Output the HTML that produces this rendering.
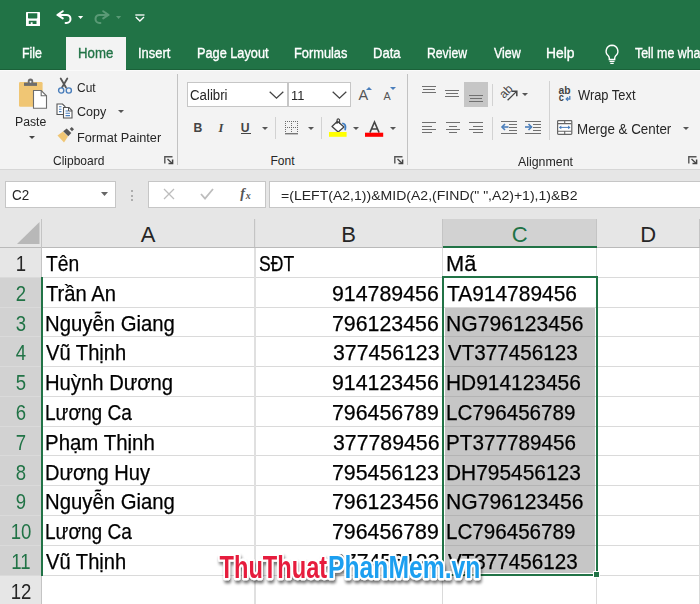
<!DOCTYPE html>
<html><head><meta charset="utf-8">
<style>
*{margin:0;padding:0;box-sizing:border-box}
html,body{width:700px;height:604px;overflow:hidden;background:#fff;font-family:"Liberation Sans",sans-serif}
.abs{position:absolute}
.t{position:absolute;white-space:nowrap;line-height:1;transform-origin:0 0}
svg{overflow:visible}
</style></head><body>
<div class="abs" style="left:0px;top:0px;width:700px;height:70px;background:#217346;"></div>
<svg class="abs" style="left:26px;top:12px;" width="14" height="14" viewBox="0 0 14 14"><rect x="0" y="0" width="14" height="14" rx="0.6" fill="#fff"/><path d="M2 1.3H11.3V6.1L10.7 6.6H2.6L2 6.1Z" fill="#217346"/><path d="M2.8 8.7H10.5V12H6.6V10.2H4.7V12H2.8Z" fill="#217346"/></svg>
<svg class="abs" style="left:56px;top:10px;" width="16" height="15" viewBox="0 0 16 15"><path d="M1.6 4.9H10.5A4 4 0 0 1 10.5 12.9H9.6" fill="none" stroke="#fff" stroke-width="2" stroke-linecap="round"/><path d="M6.8 1.2L1.6 4.9L6.8 8.4" fill="none" stroke="#fff" stroke-width="2" stroke-linecap="round" stroke-linejoin="round"/></svg>
<svg class="abs" style="left:78px;top:16px;" width="6" height="3" viewBox="0 0 6 3"><path d="M0 0H5.2L2.6 3Z" fill="#fff"/></svg>
<svg class="abs" style="left:94px;top:10px;" width="16" height="15" viewBox="0 0 16 15"><path d="M14.4 4.9H5.5A4 4 0 0 0 5.5 12.9H6.4" fill="none" stroke="#5a9a76" stroke-width="2" stroke-linecap="round"/><path d="M9.2 1.2L14.4 4.9L9.2 8.4" fill="none" stroke="#5a9a76" stroke-width="2" stroke-linecap="round" stroke-linejoin="round"/></svg>
<svg class="abs" style="left:116px;top:16px;" width="6" height="3" viewBox="0 0 6 3"><path d="M0 0H5.2L2.6 3Z" fill="#5a9a76"/></svg>
<svg class="abs" style="left:135px;top:14px;" width="10" height="8" viewBox="0 0 10 8"><path d="M0.3 1H9.5" stroke="#fff" stroke-width="1.3"/><path d="M0.8 3L4.9 7L9 3" fill="none" stroke="#fff" stroke-width="1.3"/></svg>
<div class="abs" style="left:66px;top:37px;width:60px;height:33px;background:#f3f3f3;"></div>
<div class="t" style="left:21.93px;top:46.00px;font-size:14.10px;color:#fff;transform:scaleX(0.8791);-webkit-text-stroke:0.35px #fff;">File</div>
<div class="t" style="left:77.57px;top:46.00px;font-size:14.10px;color:#217346;transform:scaleX(0.9378);-webkit-text-stroke:0.35px #217346;">Home</div>
<div class="t" style="left:138.39px;top:46.00px;font-size:14.10px;color:#fff;transform:scaleX(0.9179);-webkit-text-stroke:0.35px #fff;">Insert</div>
<div class="t" style="left:196.80px;top:46.00px;font-size:14.10px;color:#fff;transform:scaleX(0.9037);-webkit-text-stroke:0.35px #fff;">Page Layout</div>
<div class="t" style="left:294.20px;top:46.00px;font-size:14.10px;color:#fff;transform:scaleX(0.9089);-webkit-text-stroke:0.35px #fff;">Formulas</div>
<div class="t" style="left:373.28px;top:46.00px;font-size:14.10px;color:#fff;transform:scaleX(0.9281);-webkit-text-stroke:0.35px #fff;">Data</div>
<div class="t" style="left:427.05px;top:46.00px;font-size:14.10px;color:#fff;transform:scaleX(0.8654);-webkit-text-stroke:0.35px #fff;">Review</div>
<div class="t" style="left:494.00px;top:46.00px;font-size:14.10px;color:#fff;transform:scaleX(0.8794);-webkit-text-stroke:0.35px #fff;">View</div>
<div class="t" style="left:546.12px;top:46.00px;font-size:14.10px;color:#fff;transform:scaleX(0.9808);-webkit-text-stroke:0.35px #fff;">Help</div>
<div class="t" style="left:634.61px;top:46.00px;font-size:14.10px;color:#fff;transform:scaleX(0.8798);-webkit-text-stroke:0.35px #fff;">Tell me wha</div>
<svg class="abs" style="left:604px;top:44px;" width="16" height="21" viewBox="0 0 16 21"><path d="M8 1.2A6 6 0 0 0 4.3 11.8C5 12.6 5.3 13.3 5.3 14.3V15.5H10.7V14.3C10.7 13.3 11 12.6 11.7 11.8A6 6 0 0 0 8 1.2Z" fill="none" stroke="#fff" stroke-width="1.4"/><path d="M5.5 17.3H10.5M6.3 19.3H9.7" stroke="#fff" stroke-width="1.3"/></svg>
<div class="abs" style="left:0px;top:70px;width:700px;height:99px;background:#f3f3f3;"></div>
<div class="abs" style="left:0px;top:69px;width:66px;height:1px;background:#1b6139;"></div>
<div class="abs" style="left:126px;top:69px;width:574px;height:1px;background:#1b6139;"></div>
<div class="abs" style="left:0px;top:70px;width:700px;height:1px;background:#fafafa;"></div>
<div class="abs" style="left:0px;top:169px;width:700px;height:50px;background:#e6e6e6;"></div>
<div class="abs" style="left:0px;top:169px;width:700px;height:1px;background:#d6d6d6;"></div>
<div class="abs" style="left:177px;top:74px;width:1px;height:91px;background:#c2c2c2;"></div>
<div class="abs" style="left:407px;top:74px;width:1px;height:91px;background:#c2c2c2;"></div>
<div class="abs" style="left:275px;top:117px;width:1px;height:22px;background:#d2d2d2;"></div>
<div class="abs" style="left:321px;top:117px;width:1px;height:22px;background:#d2d2d2;"></div>
<div class="abs" style="left:492px;top:84px;width:1px;height:22px;background:#d2d2d2;"></div>
<div class="abs" style="left:492px;top:117px;width:1px;height:23px;background:#d2d2d2;"></div>
<div class="abs" style="left:549px;top:81px;width:1px;height:59px;background:#d2d2d2;"></div>
<svg class="abs" style="left:14px;top:76px;" width="36" height="36" viewBox="0 0 36 36"><rect x="5" y="6" width="23.6" height="24.7" rx="1.3" fill="#f0c674"/><rect x="10" y="6.6" width="13" height="3.3" fill="#6d6d6d"/><path d="M13.8 7V5.2A2.7 2.7 0 0 1 19.2 5.2V7Z" fill="#6d6d6d"/><circle cx="16.5" cy="5.8" r="1" fill="#f3f3f3"/><path d="M19.5 14.5H27.2L32.5 19.8V32.3H19.5Z" fill="#fff" stroke="#6d6d6d" stroke-width="1.1"/><path d="M27.2 14.5V19.8H32.5" fill="none" stroke="#6d6d6d" stroke-width="1.1"/></svg>
<div class="t" style="left:15.24px;top:116.00px;font-size:12.21px;color:#262626;transform:scaleX(1.0043);">Paste</div>
<svg class="abs" style="left:29px;top:136px;" width="6" height="3" viewBox="0 0 6 3"><path d="M0 0H6L3 3Z" fill="#444"/></svg>
<svg class="abs" style="left:56px;top:77px;" width="16" height="17" viewBox="0 0 16 17"><path d="M4.7 1.5L10 10.5M11.3 1.5L6 10.5" stroke="#555" stroke-width="1.8" stroke-linecap="round"/><circle cx="5.2" cy="13.5" r="2.6" fill="#f3f3f3" stroke="#4a7ebb" stroke-width="1.4"/><circle cx="12.8" cy="13.5" r="2.6" fill="#f3f3f3" stroke="#4a7ebb" stroke-width="1.4"/></svg>
<div class="t" style="left:77.34px;top:82.00px;font-size:12.35px;color:#262626;transform:scaleX(0.9685);">Cut</div>
<svg class="abs" style="left:56px;top:103px;" width="17" height="16" viewBox="0 0 17 16"><path d="M1 1H6.5L9 3.5V11.5H1Z" fill="#fff" stroke="#555" stroke-width="1.1"/><path d="M7.5 4.5H13L16 7.5V15H7.5Z" fill="#fff" stroke="#555" stroke-width="1.1"/><path d="M12.5 4.5V8H16" fill="none" stroke="#555" stroke-width="1"/><path d="M3 3.8H5.5M3 6.2H5.5M3 8.6H5.5M9.5 8H12.2M9.5 10.3H14M9.5 12.6H14" stroke="#4a7ebb" stroke-width="1.1"/></svg>
<div class="t" style="left:77.31px;top:106.00px;font-size:12.35px;color:#262626;transform:scaleX(1.0155);">Copy</div>
<svg class="abs" style="left:118px;top:110px;" width="6" height="3" viewBox="0 0 6 3"><path d="M0 0H6L3 3Z" fill="#555"/></svg>
<svg class="abs" style="left:56px;top:128px;" width="18" height="16" viewBox="0 0 18 16"><path d="M1.5 7.5L7 3.5L12 8.5L8 14.5Z" fill="#f0c674"/><path d="M7.2 3.2L10.7 0.4L15.3 5L12.3 8.3Z" fill="#555"/><path d="M13.7 0.9L15.7 -1L18 1.3L16 3.2Z" fill="#555"/></svg>
<div class="t" style="left:76.91px;top:132.00px;font-size:12.50px;color:#262626;transform:scaleX(1.0180);">Format Painter</div>
<div class="t" style="left:53.44px;top:155.00px;font-size:12.06px;color:#262626;transform:scaleX(0.9961);">Clipboard</div>
<svg class="abs" style="left:164px;top:156px;" width="10" height="9" viewBox="0 0 10 9"><path d="M0.8 7.5V0.8H8.5" fill="none" stroke="#555" stroke-width="1.4"/><path d="M3.5 3L8 7.3" stroke="#444" stroke-width="1.3"/><path d="M4.5 7.6H8.6V3.5" fill="none" stroke="#444" stroke-width="1.5"/></svg>
<div class="abs" style="left:187px;top:82px;width:101px;height:25px;background:#fff;border:1px solid #c6c6c6"></div>
<div class="abs" style="left:288px;top:82px;width:63px;height:25px;background:#fff;border:1px solid #c6c6c6"></div>
<div class="t" style="left:190.08px;top:89.00px;font-size:13.81px;color:#262626;transform:scaleX(0.9608);">Calibri</div>
<div class="t" style="left:291.20px;top:89.00px;font-size:13.08px;color:#262626;transform:scaleX(0.9810);">11</div>
<svg class="abs" style="left:269px;top:91px;" width="15" height="8" viewBox="0 0 15 8"><path d="M0.7 0.7L7.5 7.1L14.3 0.7" fill="none" stroke="#444" stroke-width="1.3"/></svg>
<svg class="abs" style="left:332px;top:91px;" width="15" height="8" viewBox="0 0 15 8"><path d="M0.7 0.7L7.5 7.1L14.3 0.7" fill="none" stroke="#444" stroke-width="1.3"/></svg>
<div class="t" style="left:358.40px;top:88.00px;font-size:14.53px;color:#555;">A</div>
<svg class="abs" style="left:366px;top:87px;" width="6" height="3" viewBox="0 0 6 3"><path d="M0 3H6L3 0Z" fill="#4a7ebb"/></svg>
<div class="t" style="left:383.60px;top:91.00px;font-size:10.76px;color:#555;">A</div>
<svg class="abs" style="left:390px;top:87px;" width="6" height="3" viewBox="0 0 6 3"><path d="M0 0H6L3 3Z" fill="#4a7ebb"/></svg>
<div class="t" style="left:193.54px;top:122.00px;font-size:12.21px;color:#444;font-weight:bold;">B</div>
<div class="t" style="left:218.50px;top:122.00px;font-size:12.50px;color:#444;font-weight:bold;font-style:italic;font-family:'Liberation Serif',serif;">I</div>
<div class="t" style="left:240.83px;top:122.00px;font-size:12.21px;color:#444;font-weight:bold;">U</div>
<div class="abs" style="left:241px;top:133px;width:10px;height:1px;background:#444;"></div>
<svg class="abs" style="left:262px;top:127px;" width="6" height="3" viewBox="0 0 6 3"><path d="M0 0H6L3 3Z" fill="#555"/></svg>
<svg class="abs" style="left:285px;top:121px;" width="14" height="14" viewBox="0 0 14 14"><rect x="0" y="0" width="1" height="1" fill="#6d6d6d"/><rect x="0" y="2" width="1" height="1" fill="#6d6d6d"/><rect x="0" y="4" width="1" height="1" fill="#6d6d6d"/><rect x="0" y="6" width="1" height="1" fill="#6d6d6d"/><rect x="0" y="8" width="1" height="1" fill="#6d6d6d"/><rect x="0" y="10" width="1" height="1" fill="#6d6d6d"/><rect x="2" y="0" width="1" height="1" fill="#6d6d6d"/><rect x="2" y="6" width="1" height="1" fill="#6d6d6d"/><rect x="4" y="0" width="1" height="1" fill="#6d6d6d"/><rect x="4" y="6" width="1" height="1" fill="#6d6d6d"/><rect x="6" y="0" width="1" height="1" fill="#6d6d6d"/><rect x="6" y="2" width="1" height="1" fill="#6d6d6d"/><rect x="6" y="4" width="1" height="1" fill="#6d6d6d"/><rect x="6" y="6" width="1" height="1" fill="#6d6d6d"/><rect x="6" y="8" width="1" height="1" fill="#6d6d6d"/><rect x="6" y="10" width="1" height="1" fill="#6d6d6d"/><rect x="8" y="0" width="1" height="1" fill="#6d6d6d"/><rect x="8" y="6" width="1" height="1" fill="#6d6d6d"/><rect x="10" y="0" width="1" height="1" fill="#6d6d6d"/><rect x="10" y="6" width="1" height="1" fill="#6d6d6d"/><rect x="12" y="0" width="1" height="1" fill="#6d6d6d"/><rect x="12" y="2" width="1" height="1" fill="#6d6d6d"/><rect x="12" y="4" width="1" height="1" fill="#6d6d6d"/><rect x="12" y="6" width="1" height="1" fill="#6d6d6d"/><rect x="12" y="8" width="1" height="1" fill="#6d6d6d"/><rect x="12" y="10" width="1" height="1" fill="#6d6d6d"/><rect x="0" y="12" width="13" height="1.4" fill="#777"/></svg>
<svg class="abs" style="left:307.5px;top:126.8px;" width="6" height="3" viewBox="0 0 6 3"><path d="M0 0H6L3 3Z" fill="#555"/></svg>
<svg class="abs" style="left:328px;top:117px;" width="20" height="21" viewBox="0 0 20 21"><path d="M4 9.5L9.5 4.2L16 10L10.2 15Z" fill="#fff" stroke="#444" stroke-width="1.3" stroke-linejoin="round"/><path d="M9 7V3.2A1.3 1.3 0 0 1 11.6 3.2V7" fill="none" stroke="#444" stroke-width="1.1"/><path d="M15 6.5C17 7 18 9 17.2 12.5" fill="none" stroke="#3f7ec4" stroke-width="1.8" stroke-linecap="round"/><rect x="1" y="15" width="17.6" height="4.8" fill="#ffff00"/></svg>
<svg class="abs" style="left:353px;top:127px;" width="6" height="3" viewBox="0 0 6 3"><path d="M0 0H6L3 3Z" fill="#555"/></svg>
<svg class="abs" style="left:365px;top:120px;" width="19" height="17" viewBox="0 0 19 17"><path d="M4.9 12.6L9.5 2L14.1 12.6M6.6 9H12.4" fill="none" stroke="#444" stroke-width="1.6"/><rect x="0" y="12.7" width="18.2" height="4.1" fill="#ff0000"/></svg>
<svg class="abs" style="left:390px;top:127px;" width="6" height="3" viewBox="0 0 6 3"><path d="M0 0H6L3 3Z" fill="#555"/></svg>
<div class="t" style="left:270.46px;top:155.00px;font-size:12.06px;color:#262626;">Font</div>
<svg class="abs" style="left:394px;top:156px;" width="10" height="9" viewBox="0 0 10 9"><path d="M0.8 7.5V0.8H8.5" fill="none" stroke="#555" stroke-width="1.4"/><path d="M3.5 3L8 7.3" stroke="#444" stroke-width="1.3"/><path d="M4.5 7.6H8.6V3.5" fill="none" stroke="#444" stroke-width="1.5"/></svg>
<div class="abs" style="left:422px;top:86px;width:14px;height:1px;background:#707070;"></div>
<div class="abs" style="left:423px;top:89px;width:12px;height:1px;background:#707070;"></div>
<div class="abs" style="left:422px;top:92px;width:14px;height:1px;background:#707070;"></div>
<div class="abs" style="left:445px;top:90px;width:14px;height:1px;background:#707070;"></div>
<div class="abs" style="left:446px;top:93px;width:12px;height:1px;background:#707070;"></div>
<div class="abs" style="left:445px;top:96px;width:14px;height:1px;background:#707070;"></div>
<div class="abs" style="left:464px;top:82px;width:24px;height:25px;background:#c6c6c6;"></div>
<div class="abs" style="left:469px;top:95px;width:14px;height:1px;background:#707070;"></div>
<div class="abs" style="left:470px;top:98px;width:12px;height:1px;background:#707070;"></div>
<div class="abs" style="left:469px;top:101px;width:14px;height:1px;background:#707070;"></div>
<div class="abs" style="left:422px;top:122px;width:14px;height:1px;background:#707070;"></div>
<div class="abs" style="left:422px;top:126px;width:10px;height:1px;background:#707070;"></div>
<div class="abs" style="left:422px;top:129px;width:14px;height:1px;background:#707070;"></div>
<div class="abs" style="left:422px;top:132px;width:10px;height:1px;background:#707070;"></div>
<div class="abs" style="left:446px;top:122px;width:14px;height:1px;background:#707070;"></div>
<div class="abs" style="left:449px;top:126px;width:8px;height:1px;background:#707070;"></div>
<div class="abs" style="left:446px;top:129px;width:14px;height:1px;background:#707070;"></div>
<div class="abs" style="left:449px;top:132px;width:8px;height:1px;background:#707070;"></div>
<div class="abs" style="left:469px;top:122px;width:14px;height:1px;background:#707070;"></div>
<div class="abs" style="left:473px;top:126px;width:10px;height:1px;background:#707070;"></div>
<div class="abs" style="left:469px;top:129px;width:14px;height:1px;background:#707070;"></div>
<div class="abs" style="left:473px;top:132px;width:10px;height:1px;background:#707070;"></div>
<svg class="abs" style="left:496px;top:82px;" width="24" height="22" viewBox="0 0 24 22"><text x="10" y="13.3" text-anchor="middle" font-family="Liberation Sans" font-size="12" fill="#444" transform="rotate(-45 10 9.5)">ab</text><path d="M11.6 18.2L20.6 9.4" stroke="#444" stroke-width="1.3"/><path d="M15.8 9.2H20.8V14.2" fill="none" stroke="#444" stroke-width="1.5"/></svg>
<svg class="abs" style="left:522px;top:93px;" width="6" height="3" viewBox="0 0 6 3"><path d="M0 0H6L3 3Z" fill="#555"/></svg>
<div class="abs" style="left:501px;top:121px;width:16px;height:1px;background:#707070;"></div>
<div class="abs" style="left:509px;top:124px;width:8px;height:1px;background:#707070;"></div>
<div class="abs" style="left:509px;top:127px;width:8px;height:1px;background:#707070;"></div>
<div class="abs" style="left:509px;top:130px;width:8px;height:1px;background:#707070;"></div>
<div class="abs" style="left:501px;top:133px;width:16px;height:1px;background:#707070;"></div>
<div class="abs" style="left:525px;top:121px;width:16px;height:1px;background:#707070;"></div>
<div class="abs" style="left:533px;top:124px;width:8px;height:1px;background:#707070;"></div>
<div class="abs" style="left:533px;top:127px;width:8px;height:1px;background:#707070;"></div>
<div class="abs" style="left:533px;top:130px;width:8px;height:1px;background:#707070;"></div>
<div class="abs" style="left:525px;top:133px;width:16px;height:1px;background:#707070;"></div>
<svg class="abs" style="left:501px;top:123px;" width="8" height="8" viewBox="0 0 8 8"><path d="M1 4H7.5" stroke="#4a7ebb" stroke-width="1.6"/><path d="M4 1L1 4L4 7" fill="none" stroke="#4a7ebb" stroke-width="1.6"/></svg>
<svg class="abs" style="left:525px;top:123px;" width="8" height="8" viewBox="0 0 8 8"><path d="M0 4H6.5" stroke="#4a7ebb" stroke-width="1.6"/><path d="M3.5 1L6.5 4L3.5 7" fill="none" stroke="#4a7ebb" stroke-width="1.6"/></svg>
<svg class="abs" style="left:558px;top:86px;" width="14" height="16" viewBox="0 0 14 16"><text x="0.6" y="7.8" font-family="Liberation Sans" font-weight="bold" font-size="10.3" fill="#444">ab</text><text x="1" y="14.9" font-family="Liberation Sans" font-weight="bold" font-size="10.8" fill="#444" transform="scale(0.85 1)">c</text><path d="M11.8 10V13H8.8" fill="none" stroke="#4a7ebb" stroke-width="1.3"/><path d="M10 11.3L8.2 13L10 14.7" fill="none" stroke="#4a7ebb" stroke-width="1.2"/></svg>
<div class="t" style="left:577.70px;top:89.00px;font-size:13.95px;color:#262626;transform:scaleX(0.9233);">Wrap Text</div>
<svg class="abs" style="left:557px;top:120px;" width="16" height="15" viewBox="0 0 16 15"><rect x="0.6" y="0.6" width="14.2" height="13.8" rx="0.8" fill="#fff" stroke="#666" stroke-width="1.2"/><path d="M0.5 3.6H14.5M0.5 11.3H14.5M7.7 0.5V3.6M7.7 11.3V14.5" stroke="#666" stroke-width="1.1"/><path d="M3.5 7.4H12" stroke="#4a7ebb" stroke-width="1"/><path d="M1.8 7.4L4.3 5.6V9.2Z M13.6 7.4L11.1 5.6V9.2Z" fill="#4a7ebb"/></svg>
<div class="t" style="left:576.66px;top:123.00px;font-size:13.95px;color:#262626;transform:scaleX(0.9586);">Merge & Center</div>
<svg class="abs" style="left:683px;top:127px;" width="6" height="3" viewBox="0 0 6 3"><path d="M0 0H6L3 3Z" fill="#555"/></svg>
<div class="t" style="left:517.70px;top:156.00px;font-size:12.50px;color:#262626;transform:scaleX(0.9887);">Alignment</div>
<svg class="abs" style="left:688px;top:156px;" width="10" height="9" viewBox="0 0 10 9"><path d="M0.8 7.5V0.8H8.5" fill="none" stroke="#555" stroke-width="1.4"/><path d="M3.5 3L8 7.3" stroke="#444" stroke-width="1.3"/><path d="M4.5 7.6H8.6V3.5" fill="none" stroke="#444" stroke-width="1.5"/></svg>
<div class="abs" style="left:5px;top:181px;width:111px;height:27px;background:#fff;border:1px solid #c6c6c6"></div>
<div class="t" style="left:11.77px;top:189.00px;font-size:13.95px;color:#262626;transform:scaleX(0.9628);">C2</div>
<svg class="abs" style="left:101px;top:192px;" width="8" height="4" viewBox="0 0 8 4"><path d="M0 0H7L3.5 4Z" fill="#666"/></svg>
<div class="abs" style="left:131px;top:190px;width:2px;height:2px;background:#9a9a9a;border-radius:1px"></div>
<div class="abs" style="left:131px;top:194.5px;width:2px;height:2px;background:#9a9a9a;border-radius:1px"></div>
<div class="abs" style="left:131px;top:199px;width:2px;height:2px;background:#9a9a9a;border-radius:1px"></div>
<div class="abs" style="left:148px;top:181px;width:118px;height:27px;background:#fff;border:1px solid #c6c6c6"></div>
<svg class="abs" style="left:163px;top:188px;" width="12" height="12" viewBox="0 0 12 12"><path d="M1 1L11 11M11 1L1 11" stroke="#bdbdbd" stroke-width="1.3"/></svg>
<svg class="abs" style="left:200px;top:188px;" width="14" height="12" viewBox="0 0 14 12"><path d="M1 6L5 10.5L13 1" fill="none" stroke="#bdbdbd" stroke-width="1.8"/></svg>
<div class="t" style="left:240.30px;top:187.00px;font-size:14.00px;color:#555;font-style:italic;font-family:'Liberation Serif',serif;font-weight:bold;">f</div>
<div class="t" style="left:245.66px;top:191.00px;font-size:10.00px;color:#555;font-style:italic;font-family:'Liberation Serif',serif;font-weight:bold;">x</div>
<div class="abs" style="left:269px;top:181px;width:440px;height:27px;background:#fff;border:1px solid #c6c6c6"></div>
<div class="t" style="left:281.14px;top:189.00px;font-size:13.37px;color:#262626;transform:scaleX(1.0519);">=(LEFT(A2,1))&amp;MID(A2,(FIND(" ",A2)+1),1)&amp;B2</div>
<div class="abs" style="left:0px;top:219px;width:700px;height:385px;background:#fff;"></div>
<div class="abs" style="left:0px;top:219px;width:700px;height:29px;background:#e6e6e6;"></div>
<div class="abs" style="left:443px;top:219px;width:154px;height:29px;background:#d2d2d2;"></div>
<div class="abs" style="left:0px;top:248px;width:41px;height:356px;background:#e6e6e6;"></div>
<div class="abs" style="left:0px;top:278px;width:41px;height:298px;background:#d2d2d2;"></div>
<div class="abs" style="left:0px;top:247px;width:700px;height:1px;background:#dadada;"></div>
<div class="abs" style="left:0px;top:277px;width:700px;height:1px;background:#dadada;"></div>
<div class="abs" style="left:0px;top:307px;width:700px;height:1px;background:#dadada;"></div>
<div class="abs" style="left:0px;top:336px;width:700px;height:1px;background:#dadada;"></div>
<div class="abs" style="left:0px;top:366px;width:700px;height:1px;background:#dadada;"></div>
<div class="abs" style="left:0px;top:396px;width:700px;height:1px;background:#dadada;"></div>
<div class="abs" style="left:0px;top:426px;width:700px;height:1px;background:#dadada;"></div>
<div class="abs" style="left:0px;top:455px;width:700px;height:1px;background:#dadada;"></div>
<div class="abs" style="left:0px;top:485px;width:700px;height:1px;background:#dadada;"></div>
<div class="abs" style="left:0px;top:515px;width:700px;height:1px;background:#dadada;"></div>
<div class="abs" style="left:0px;top:545px;width:700px;height:1px;background:#dadada;"></div>
<div class="abs" style="left:0px;top:575px;width:700px;height:1px;background:#dadada;"></div>
<div class="abs" style="left:41px;top:219px;width:1px;height:385px;background:#dadada;"></div>
<div class="abs" style="left:442px;top:219px;width:1px;height:385px;background:#dadada;"></div>
<div class="abs" style="left:596px;top:219px;width:1px;height:385px;background:#dadada;"></div>
<div class="abs" style="left:699px;top:219px;width:1px;height:385px;background:#dadada;"></div>
<div class="abs" style="left:254px;top:219px;width:2px;height:385px;background:#e0e0e0;"></div>
<div class="abs" style="left:445px;top:308px;width:150px;height:265px;background:#c6c6c6;"></div>
<div class="abs" style="left:445px;top:336px;width:150px;height:1px;background:#b4b4b4;"></div>
<div class="abs" style="left:445px;top:366px;width:150px;height:1px;background:#b4b4b4;"></div>
<div class="abs" style="left:445px;top:396px;width:150px;height:1px;background:#b4b4b4;"></div>
<div class="abs" style="left:445px;top:426px;width:150px;height:1px;background:#b4b4b4;"></div>
<div class="abs" style="left:445px;top:455px;width:150px;height:1px;background:#b4b4b4;"></div>
<div class="abs" style="left:445px;top:485px;width:150px;height:1px;background:#b4b4b4;"></div>
<div class="abs" style="left:445px;top:515px;width:150px;height:1px;background:#b4b4b4;"></div>
<div class="abs" style="left:445px;top:545px;width:150px;height:1px;background:#b4b4b4;"></div>
<div class="abs" style="left:0px;top:247px;width:700px;height:1px;background:#bababa;"></div>
<div class="abs" style="left:254px;top:219px;width:1px;height:28px;background:#c4c4c4;"></div>
<div class="abs" style="left:442px;top:219px;width:1px;height:28px;background:#c4c4c4;"></div>
<div class="abs" style="left:596px;top:219px;width:1px;height:28px;background:#c4c4c4;"></div>
<div class="abs" style="left:699px;top:219px;width:1px;height:28px;background:#c4c4c4;"></div>
<div class="abs" style="left:41px;top:219px;width:1px;height:385px;background:#c4c4c4;"></div>
<svg class="abs" style="left:17px;top:222px;" width="23" height="22" viewBox="0 0 23 22"><path d="M22.5 0V22H0Z" fill="#b8b8b8"/></svg>
<div class="t" style="left:0;width:42px;text-align:center;top:253px;font-size:21.6px;color:#262626;transform:scaleX(0.86);transform-origin:21px 0">1</div>
<div class="t" style="left:0;width:42px;text-align:center;top:283px;font-size:21.6px;color:#217346;transform:scaleX(0.86);transform-origin:21px 0">2</div>
<div class="t" style="left:0;width:42px;text-align:center;top:313px;font-size:21.6px;color:#217346;transform:scaleX(0.86);transform-origin:21px 0">3</div>
<div class="t" style="left:0;width:42px;text-align:center;top:342px;font-size:21.6px;color:#217346;transform:scaleX(0.86);transform-origin:21px 0">4</div>
<div class="t" style="left:0;width:42px;text-align:center;top:372px;font-size:21.6px;color:#217346;transform:scaleX(0.86);transform-origin:21px 0">5</div>
<div class="t" style="left:0;width:42px;text-align:center;top:402px;font-size:21.6px;color:#217346;transform:scaleX(0.86);transform-origin:21px 0">6</div>
<div class="t" style="left:0;width:42px;text-align:center;top:432px;font-size:21.6px;color:#217346;transform:scaleX(0.86);transform-origin:21px 0">7</div>
<div class="t" style="left:0;width:42px;text-align:center;top:462px;font-size:21.6px;color:#217346;transform:scaleX(0.86);transform-origin:21px 0">8</div>
<div class="t" style="left:0;width:42px;text-align:center;top:491px;font-size:21.6px;color:#217346;transform:scaleX(0.86);transform-origin:21px 0">9</div>
<div class="t" style="left:0;width:42px;text-align:center;top:521px;font-size:21.6px;color:#217346;transform:scaleX(0.86);transform-origin:21px 0">10</div>
<div class="t" style="left:0;width:42px;text-align:center;top:551px;font-size:21.6px;color:#217346;transform:scaleX(0.86);transform-origin:21px 0">11</div>
<div class="t" style="left:0;width:42px;text-align:center;top:581px;font-size:21.6px;color:#262626;transform:scaleX(0.86);transform-origin:21px 0">12</div>
<div class="t" style="left:41.5px;width:213.2px;text-align:center;top:224px;font-size:22px;color:#262626">A</div>
<div class="t" style="left:254.7px;width:187.90000000000003px;text-align:center;top:224px;font-size:22px;color:#262626">B</div>
<div class="t" style="left:442.6px;width:154.0px;text-align:center;top:224px;font-size:22px;color:#217346">C</div>
<div class="t" style="left:596.6px;width:103px;text-align:center;top:224px;font-size:22px;color:#262626">D</div>
<div class="t" style="left:46.00px;top:253.00px;font-size:21.60px;color:#000;transform:scaleX(0.8915);-webkit-text-stroke:0.25px #000;">Tên</div>
<div class="t" style="left:258.55px;top:253.00px;font-size:21.60px;color:#000;transform:scaleX(0.8136);-webkit-text-stroke:0.25px #000;">SĐT</div>
<div class="t" style="left:445.90px;top:253.00px;font-size:21.60px;color:#000;transform:scaleX(1.0086);-webkit-text-stroke:0.25px #000;">Mã</div>
<div class="t" style="left:45.98px;top:283.00px;font-size:21.60px;color:#000;transform:scaleX(0.9358);-webkit-text-stroke:0.25px #000;">Trần An</div>
<div class="t" style="left:332.30px;top:283.00px;font-size:21.60px;color:#000;transform:scaleX(0.9884);-webkit-text-stroke:0.25px #000;">914789456</div>
<div class="t" style="left:447.27px;top:283.00px;font-size:21.60px;color:#000;transform:scaleX(0.9691);-webkit-text-stroke:0.25px #000;">TA914789456</div>
<div class="t" style="left:44.71px;top:313.00px;font-size:21.60px;color:#000;transform:scaleX(0.9409);-webkit-text-stroke:0.25px #000;">Nguyễn Giang</div>
<div class="t" style="left:332.30px;top:313.00px;font-size:21.60px;color:#000;transform:scaleX(0.9884);-webkit-text-stroke:0.25px #000;">796123456</div>
<div class="t" style="left:445.95px;top:313.00px;font-size:21.60px;color:#000;transform:scaleX(0.9779);-webkit-text-stroke:0.25px #000;">NG796123456</div>
<div class="t" style="left:46.30px;top:342.00px;font-size:21.60px;color:#000;transform:scaleX(0.9327);-webkit-text-stroke:0.25px #000;">Vũ Thịnh</div>
<div class="t" style="left:332.63px;top:342.00px;font-size:21.60px;color:#000;transform:scaleX(0.9853);-webkit-text-stroke:0.25px #000;">377456123</div>
<div class="t" style="left:447.60px;top:342.00px;font-size:21.60px;color:#000;transform:scaleX(0.9552);-webkit-text-stroke:0.25px #000;">VT377456123</div>
<div class="t" style="left:44.72px;top:372.00px;font-size:21.60px;color:#000;transform:scaleX(0.9373);-webkit-text-stroke:0.25px #000;">Huỳnh Dương</div>
<div class="t" style="left:332.30px;top:372.00px;font-size:21.60px;color:#000;transform:scaleX(0.9884);-webkit-text-stroke:0.25px #000;">914123456</div>
<div class="t" style="left:445.97px;top:372.00px;font-size:21.60px;color:#000;transform:scaleX(0.9675);-webkit-text-stroke:0.25px #000;">HD914123456</div>
<div class="t" style="left:44.81px;top:402.00px;font-size:21.60px;color:#000;transform:scaleX(0.8839);-webkit-text-stroke:0.25px #000;">Lương Ca</div>
<div class="t" style="left:332.30px;top:402.00px;font-size:21.60px;color:#000;transform:scaleX(0.9884);-webkit-text-stroke:0.25px #000;">796456789</div>
<div class="t" style="left:445.99px;top:402.00px;font-size:21.60px;color:#000;transform:scaleX(0.9537);-webkit-text-stroke:0.25px #000;">LC796456789</div>
<div class="t" style="left:44.70px;top:432.00px;font-size:21.60px;color:#000;transform:scaleX(0.9467);-webkit-text-stroke:0.25px #000;">Phạm Thịnh</div>
<div class="t" style="left:332.63px;top:432.00px;font-size:21.60px;color:#000;transform:scaleX(0.9853);-webkit-text-stroke:0.25px #000;">377789456</div>
<div class="t" style="left:445.98px;top:432.00px;font-size:21.60px;color:#000;transform:scaleX(0.9575);-webkit-text-stroke:0.25px #000;">PT377789456</div>
<div class="t" style="left:44.73px;top:462.00px;font-size:21.60px;color:#000;transform:scaleX(0.9317);-webkit-text-stroke:0.25px #000;">Dương Huy</div>
<div class="t" style="left:332.30px;top:462.00px;font-size:21.60px;color:#000;transform:scaleX(0.9884);-webkit-text-stroke:0.25px #000;">795456123</div>
<div class="t" style="left:445.97px;top:462.00px;font-size:21.60px;color:#000;transform:scaleX(0.9675);-webkit-text-stroke:0.25px #000;">DH795456123</div>
<div class="t" style="left:44.71px;top:491.00px;font-size:21.60px;color:#000;transform:scaleX(0.9409);-webkit-text-stroke:0.25px #000;">Nguyễn Giang</div>
<div class="t" style="left:332.30px;top:491.00px;font-size:21.60px;color:#000;transform:scaleX(0.9884);-webkit-text-stroke:0.25px #000;">796123456</div>
<div class="t" style="left:445.95px;top:491.00px;font-size:21.60px;color:#000;transform:scaleX(0.9779);-webkit-text-stroke:0.25px #000;">NG796123456</div>
<div class="t" style="left:44.81px;top:521.00px;font-size:21.60px;color:#000;transform:scaleX(0.8839);-webkit-text-stroke:0.25px #000;">Lương Ca</div>
<div class="t" style="left:332.30px;top:521.00px;font-size:21.60px;color:#000;transform:scaleX(0.9884);-webkit-text-stroke:0.25px #000;">796456789</div>
<div class="t" style="left:445.99px;top:521.00px;font-size:21.60px;color:#000;transform:scaleX(0.9537);-webkit-text-stroke:0.25px #000;">LC796456789</div>
<div class="t" style="left:46.30px;top:551.00px;font-size:21.60px;color:#000;transform:scaleX(0.9327);-webkit-text-stroke:0.25px #000;">Vũ Thịnh</div>
<div class="t" style="left:332.63px;top:551.00px;font-size:21.60px;color:#000;transform:scaleX(0.9853);-webkit-text-stroke:0.25px #000;">377456123</div>
<div class="t" style="left:447.60px;top:551.00px;font-size:21.60px;color:#000;transform:scaleX(0.9552);-webkit-text-stroke:0.25px #000;">VT377456123</div>
<div class="abs" style="left:41px;top:277px;width:2px;height:299px;background:#217346;"></div>
<div class="abs" style="left:443px;top:246px;width:154px;height:2px;background:#217346;"></div>
<div class="abs" style="left:442px;top:276px;width:156px;height:300px;background:transparent;border:2px solid #217346"></div>
<div class="abs" style="left:594px;top:572px;width:5px;height:5px;background:#217346;outline:1px solid #fff"></div>
<svg class="abs" style="left:200px;top:535px" width="300" height="69" viewBox="0 0 300 69"><defs><filter id="sh" x="-10%" y="-30%" width="120%" height="160%"><feGaussianBlur in="SourceAlpha" stdDeviation="1.6"/><feOffset dx="1" dy="3" result="b"/><feComponentTransfer><feFuncA type="linear" slope="0.55"/></feComponentTransfer><feMerge><feMergeNode/><feMergeNode in="SourceGraphic"/></feMerge></filter></defs><g filter="url(#sh)" font-family="Liberation Sans" font-weight="bold" font-size="31.5" stroke="#fff" stroke-width="4.5" stroke-linejoin="round" paint-order="stroke"><text transform="translate(19.6 43) scale(0.75 1)" fill="#e61f3d">ThuThuat</text><text transform="translate(128 43) scale(0.785 1)" fill="#1c9ff0">PhanMem.vn</text></g></svg>
</body></html>
